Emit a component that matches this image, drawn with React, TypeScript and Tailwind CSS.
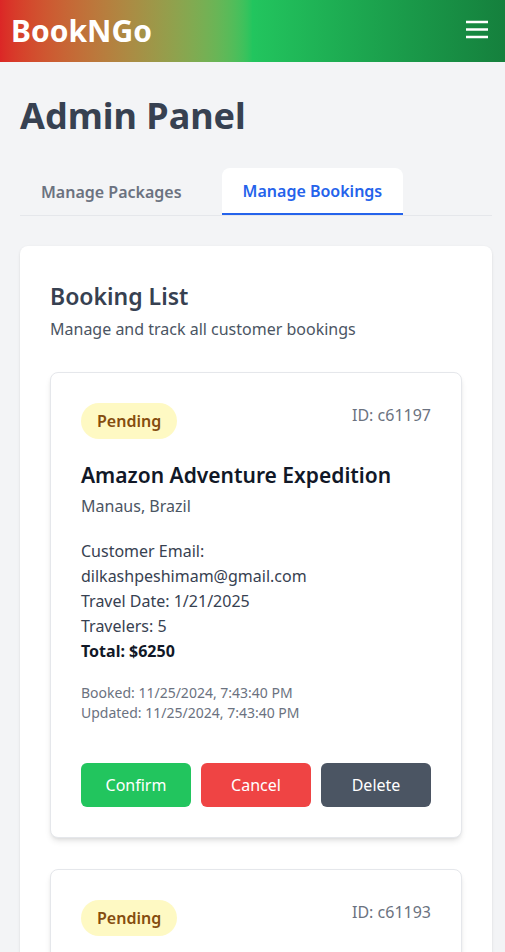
const font = { fontFamily: '"Noto Sans", "Open Sans", sans-serif' };

type Booking = {
  id: string;
  status: string;
  title: string;
  location: string;
  email: string;
  date: string;
  travelers: number;
  total: number;
  booked: string;
  updated: string;
};

const bookings: Booking[] = [
  {
    id: 'c61197',
    status: 'Pending',
    title: 'Amazon Adventure Expedition',
    location: 'Manaus, Brazil',
    email: 'dilkashpeshimam@gmail.com',
    date: '1/21/2025',
    travelers: 5,
    total: 6250,
    booked: '11/25/2024, 7:43:40 PM',
    updated: '11/25/2024, 7:43:40 PM',
  },
  {
    id: 'c61193',
    status: 'Pending',
    title: 'Amazon Adventure Expedition',
    location: 'Manaus, Brazil',
    email: 'dilkashpeshimam@gmail.com',
    date: '1/21/2025',
    travelers: 5,
    total: 6250,
    booked: '11/25/2024, 7:43:40 PM',
    updated: '11/25/2024, 7:43:40 PM',
  },
];

function BookingCard({ b }: { b: Booking }) {
  return (
    <div className="rounded-lg border border-[#e5e7eb] bg-white p-[30px] shadow-md">
      <div className="flex items-start justify-between">
        <span className="rounded-full bg-[#fef9c3] px-4 py-[6px] text-base font-semibold text-[#854d0e]">
          {b.status}
        </span>
        <span className="text-[#6b7280]">ID: {b.id}</span>
      </div>
      <h3 className="mt-[22px] text-[21px] leading-[28px] font-semibold text-[#111827]">{b.title}</h3>
      <p className="mt-[5px] text-[#4b5563]">{b.location}</p>

      <div className="mt-[21px] leading-[25px] text-[#374151]">
        <p>Customer Email: {b.email}</p>
        <p>Travel Date: {b.date}</p>
        <p>Travelers: {b.travelers}</p>
        <p className="font-bold text-[#111827]">Total: ${b.total}</p>
      </div>

      <div className="mt-[19px] text-sm text-[#6b7280]">
        <p>Booked: {b.booked}</p>
        <p>Updated: {b.updated}</p>
      </div>

      <div className="mt-[40px] flex gap-[10px]">
        <button className="h-[44px] w-[110px] rounded-md bg-[#22c55e] text-white">Confirm</button>
        <button className="h-[44px] w-[110px] rounded-md bg-[#ef4444] text-white">Cancel</button>
        <button className="h-[44px] w-[110px] rounded-md bg-[#4b5563] text-white">Delete</button>
      </div>
    </div>
  );
}

export default function App() {
  return (
    <div className="min-h-screen bg-[#f3f4f6]" style={font}>
      {/* Header */}
      <header className="flex h-[62px] items-center justify-between bg-gradient-to-r from-[#dc2626] via-[#22c55e] to-[#15803d] pl-[11px] pr-[16px]">
        <span className="text-3xl font-bold text-white">BookNGo</span>
        <svg width="24" height="20" viewBox="0 0 24 20" className="-mt-[4px]">
          <path d="M1 3h22M1 10.5h22M1 18h22" stroke="white" strokeWidth="2.4" />
        </svg>
      </header>

      <main className="pl-5 pr-[13px] pt-[34px]">
        <h1 className="text-4xl font-bold text-[#374151]">Admin Panel</h1>

        {/* Tabs */}
        <div className="mt-[32px] flex border-b border-[#e5e7eb]">
          <button className="px-[21px] pt-[11px] pb-[10px] font-semibold text-[#6b7280]">Manage Packages</button>
          <button className="ml-[19px] rounded-t-lg border-b-2 border-[#2563eb] bg-white px-[21px] pt-[11px] pb-[10px] font-semibold text-[#2563eb]">
            Manage Bookings
          </button>
        </div>

        {/* Booking list */}
        <section className="mt-[30px] rounded-lg bg-white px-[30px] pt-[32px] pb-[30px] shadow">
          <h2 className="text-[23px] leading-[36px] font-semibold text-[#374151]">Booking List</h2>
          <p className="mt-[3px] text-[#4b5563]">Manage and track all customer bookings</p>
          <div className="mt-[31px] flex flex-col gap-[31px]">
            {bookings.map((b) => (
              <BookingCard key={b.id} b={b} />
            ))}
          </div>
        </section>
      </main>
    </div>
  );
}
